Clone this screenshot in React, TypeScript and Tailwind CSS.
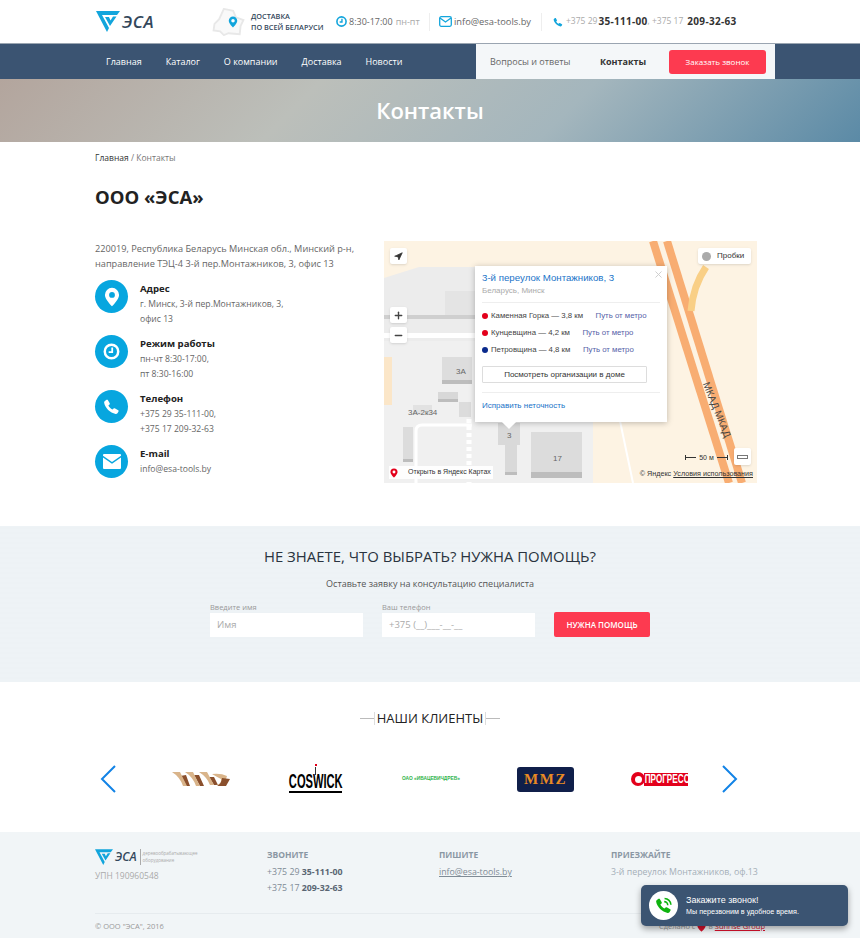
import { Navigation, Plus, Minus, X } from 'lucide-react';

const font = { fontFamily: '"Open Sans", "Noto Sans", sans-serif' };
const mapFont = { fontFamily: '"Liberation Sans", sans-serif' };

const Logo = ({ small }: { small?: boolean }) => (
  <div className="flex items-center">
    <svg width={small ? 18 : 24} height={small ? 16 : 21} viewBox="0 0 24 21">
      <path d="M0 0H24L21 4H6L13 17L11 21Z" fill="#12a5dc" />
      <path d="M9 6H13L14.500 9.500L17 5.500H20.500L14 15Z" fill="#12a5dc" />
    </svg>
    <span className={small ? 'ml-[2px] text-[12px] font-semibold italic text-[#33475b]' : 'ml-[2px] text-[17px] font-semibold italic text-[#33475b] tracking-[0.5px]'}>ЭСА</span>
  </div>
);

const PinIcon = ({ size, color, hole }: { size: number; color: string; hole: string }) => (
  <svg width={size} height={size} viewBox="0 0 24 24">
    <path d="M12 1a8.500 8.500 0 0 0-8.500 8.500C3.500 15 12 23 12 23s8.500-8 8.500-13.500A8.500 8.500 0 0 0 12 1z" fill={color} />
    <circle cx="12" cy="9.500" r="3.500" fill={hole} />
  </svg>
);

const HandsetIcon = ({ size, color }: { size: number; color: string }) => (
  <svg width={size} height={size} viewBox="0 0 24 24">
    <path d="M6.600 2.500 9.500 7.500c.3.500.2 1.100-.2 1.500L7.600 10.700c1.200 2.500 3.200 4.500 5.700 5.700l1.700-1.700c.4-.4 1-.5 1.500-.2l5 2.900c.6.300.8 1.100.4 1.700l-1.500 2.300c-.6.900-1.600 1.300-2.600 1.100C10 21 3 14 1.600 6.700c-.2-1 .2-2 1.100-2.600l2.200-1.500c.6-.4 1.400-.2 1.700-.1z" fill={color} />
  </svg>
);

const ClockIcon = () => (
  <svg width="17" height="17" viewBox="0 0 24 24" fill="none">
    <circle cx="12" cy="12" r="9.500" stroke="white" strokeWidth="3.500" />
    <path d="M13 6.500V13H8" stroke="white" strokeWidth="2.500" />
  </svg>
);

const EnvelopeIcon = () => (
  <svg width="18" height="15" viewBox="0 0 18 15">
    <path d="M1 0h16a1 1 0 0 1 1 1v.8L9 8 0 1.800V1a1 1 0 0 1 1-1z" fill="white" />
    <path d="M0 3.600 9 9.800l9-6.200V14a1 1 0 0 1-1 1H1a1 1 0 0 1-1-1z" fill="white" />
  </svg>
);

const navItems = ['Главная', 'Каталог', 'О компании', 'Доставка', 'Новости'];

const contacts = [
  { icon: <PinIcon size={20} color="white" hole="#07a6df" />, title: 'Адрес', lines: ['г. Минск, 3-й пер.Монтажников, 3,', 'офис 13'] },
  { icon: <ClockIcon />, title: 'Режим работы', lines: ['пн-чт 8:30-17:00,', 'пт 8:30-16:00'] },
  { icon: <HandsetIcon size={17} color="white" />, title: 'Телефон', lines: ['+375 29 35-111-00,', '+375 17 209-32-63'] },
  { icon: <EnvelopeIcon />, title: 'E-mail', lines: ['info@esa-tools.by'] },
];

const metro = [
  { color: 'bg-[#e3001b]', name: 'Каменная Горка — 3,8 км' },
  { color: 'bg-[#e3001b]', name: 'Кунцевщина — 4,2 км' },
  { color: 'bg-[#0a2a8c]', name: 'Петровщина — 4,8 км' },
];

const MapView = () => (
  <div className="relative w-[373px] h-[242px] overflow-hidden bg-[#fdf3e3]" style={mapFont}>
    <svg className="absolute inset-0" width="373" height="242" viewBox="0 0 373 242">
      <path d="M0 37 L35 26 L91 26 L91 100 L0 100z" fill="#ececec" />
      <path d="M61 50h60v26H61z" fill="#e4e4e4" />
      <path d="M0 74h130v4H0z" fill="#cfcfcf" />
      <path d="M0 100h209v142H0z" fill="#f0f0f0" />
      <path d="M0 92h130v5H0z" fill="#ffffff" />
      <path d="M0 116h8v48H0z" fill="#fbe6c8" />
      <path d="M58 116h30v26H58z" fill="#dddddd" />
      <path d="M58 139h30v4H58z" fill="#bdbdbd" />
      <path d="M54 151h20v10H54z" fill="#d8d8d8" />
      <path d="M54 158h20v3H54z" fill="#bdbdbd" />
      <path d="M75 161h12v15H75z" fill="#dcdcdc" />
      <path d="M29 164h19v10H29z" fill="#e2e2e2" />
      <path d="M19 186h10v35H19z" fill="#dcdcdc" />
      <path d="M19 218h10v3H19z" fill="#bdbdbd" />
      <path d="M114 182h22v22h-3v30h-12v-30h-7z" fill="#d9d9d9" />
      <path d="M121 231h12v3h-12z" fill="#bdbdbd" />
      <path d="M147 191h51v46h-51z" fill="#dcdcdc" />
      <path d="M147 231h51v6h-51z" fill="#bdbdbd" />
      <path d="M32 242V190q0-6 6-6h50" fill="none" stroke="#ffffff" strokeWidth="3" />
      <path d="M85 178v64" fill="none" stroke="#ffffff" strokeWidth="5" strokeDasharray="4 3" />
      <path d="M236 180 L249 242" fill="none" stroke="#ffffff" strokeWidth="2" />
      <path d="M269 0 L345 242" fill="none" stroke="#f8ad72" strokeWidth="8" />
      <path d="M283 0 L358 242" fill="none" stroke="#f8ad72" strokeWidth="8" />
      <path d="M322 26 Q309 45 307 70" fill="none" stroke="#f9cf86" strokeWidth="7" />
    </svg>

    <span className="absolute left-[72px] top-[125px] text-[8px] text-[#666]">3А</span>
    <span className="absolute left-[24px] top-[166px] text-[8px] text-[#666]">3А-2к34</span>
    <span className="absolute left-[123px] top-[189px] text-[8px] text-[#666]">3</span>
    <span className="absolute left-[169px] top-[212px] text-[8px] text-[#666]">17</span>
    <span className="absolute left-[322px] top-[134px] rotate-[68deg] origin-left whitespace-nowrap text-[10px] text-[#444]">МКАД МКАД</span>

    <div className="absolute left-[6px] top-[7px] w-[17px] h-[16px] bg-white shadow-sm flex items-center justify-center rounded-[2px]">
      <Navigation size={9} fill="#333" stroke="#333" />
    </div>
    <div className="absolute left-[6px] top-[66px] w-[17px] h-[16px] bg-white shadow-sm flex items-center justify-center rounded-[2px]">
      <Plus size={11} strokeWidth={3} color="#444" />
    </div>
    <div className="absolute left-[6px] top-[86px] w-[17px] h-[16px] bg-white shadow-sm flex items-center justify-center rounded-[2px]">
      <Minus size={11} strokeWidth={3} color="#444" />
    </div>
    <div className="absolute left-[314px] top-[7px] w-[53px] h-[16px] bg-white shadow-sm rounded-[2px] flex items-center pl-[4px] gap-[6px]">
      <span className="w-[9px] h-[9px] rounded-full bg-[#aaa]" />
      <span className="text-[8px] text-[#333]">Пробки</span>
    </div>

    {/* balloon */}
    <div className="absolute left-[91px] top-[25px] w-[192px] h-[156px] bg-white shadow-[0_1px_6px_rgba(0,0,0,0.25)] px-[7px] pt-[5px]">
      <X size={11} color="#ccc" className="absolute right-[3px] top-[3px]" />
      <div className="text-[9.700px] leading-[14px] text-[#1a73c8]">3-й переулок Монтажников, 3</div>
      <div className="text-[8px] leading-[11px] text-[#aaa]">Беларусь, Минск</div>
      <div className="h-px bg-[#eee] mt-[6px] mb-[7px]" />
      <div className="flex flex-col gap-[6px]">
        {metro.map((m) => (
          <div key={m.name} className="flex items-center h-[11px] text-[7.800px] text-[#444]">
            <span className={`w-[6px] h-[6px] rounded-full ${m.color} mr-[3px]`} />
            {m.name}
            <span className="ml-[12.500px] text-[#5561a8]">Путь от метро</span>
          </div>
        ))}
      </div>
      <div className="mt-[11px] h-[17px] w-[165px] border border-[#ddd] rounded-[1px] flex items-center justify-center text-[8px] text-[#333]">Посмотреть организации в доме</div>
      <div className="h-px bg-[#eee] mt-[9px] mb-[7px]" />
      <div className="text-[8px] text-[#1a73c8]">Исправить неточность</div>
      <span className="absolute left-[29px] -bottom-[5px] w-[10px] h-[10px] rotate-45 bg-white" />
    </div>

    <div className="absolute left-[5px] bottom-[4px] h-[13px] w-[104px] bg-white/90 flex items-center">
      <PinIcon size={10} color="#e3001b" hole="white" />
      <span className="ml-[9px] text-[7px] text-[#333]">Открыть в Яндекс Картах</span>
    </div>
    <div className="absolute right-[4px] bottom-[5px] text-[7.200px] text-[#333] leading-[9px]">
      © Яндекс <span className="underline">Условия использования</span>
    </div>
    <div className="absolute left-[301px] top-[212px] w-[43px] flex items-center justify-between text-[7px] leading-[9px] text-[#333]">
      <span className="h-[5px] w-[11px] border-l border-[#333] relative"><span className="absolute top-[2px] left-0 w-full h-px bg-[#333]" /></span>
      <span>50 м</span>
      <span className="h-[5px] w-[11px] border-r border-[#333] relative"><span className="absolute top-[2px] left-0 w-full h-px bg-[#333]" /></span>
    </div>
    <div className="absolute left-[350px] top-[207px] w-[17px] h-[17px] bg-white shadow-sm rounded-[2px] flex items-center justify-center">
      <span className="w-[11px] h-[4px] border border-[#777]" />
    </div>
  </div>
);

const ClientLogos = () => (
  <div className="flex items-center gap-[58px] w-[516px] h-[30px] ml-[55px] mr-[33px]" style={mapFont}>
    <svg className="shrink-0" width="58" height="16" viewBox="0 0 58 16">
      <path d="M8 5l6 10h4l-4-11zM22 4l6 11h4l-5-11zM37 6l5 8h4l-4-8z" fill="#8a4f2c" />
      <path d="M0 1h8l7 14h-4q-3-9-11-14zM13 1h8l7 14h-4q-3-9-11-14zM27 1h8l7 13h-4q-3-8-11-13z" fill="#d9b48a" />
      <path d="M40 3q9-1 15 2l-3 9h-8q6-1 5-6-4-2-9-5z" fill="#d9b48a" />
      <path d="M50 7l8 1-4 7h-9q5-3 5-8z" fill="#8a4f2c" />
    </svg>
    <div className="relative ml-[1px] w-[53px] h-[30px] shrink-0 flex flex-col items-center justify-end">
      <span className="absolute top-0 left-[26px] w-[2px] h-[2px] bg-[#e3001b]" />
      <span className="absolute top-[3px] left-[26px] w-px h-[8px] bg-[#333]" />
      <span className="text-[21px] leading-[20px] font-bold text-black scale-x-[0.53] whitespace-nowrap">COSWICK</span>
      <span className="w-full h-[2px] bg-black mb-[1px]" />
    </div>
    <span className="ml-[2px] w-[57px] shrink-0 text-[4.800px] font-bold text-[#2eb34a] whitespace-nowrap">ОАО «ИВАЦЕВИЧДРЕВ»</span>
    <div className="w-[57px] h-[25px] shrink-0 rounded-[3px] bg-[#101f4a] flex items-center justify-center text-[15px] font-bold text-[#e88a24] tracking-[1.500px]" style={{ fontFamily: '"Liberation Serif", serif' }}>MMZ</div>
    <div className="-ml-[1px] w-[57px] h-[16px] shrink-0 overflow-hidden flex items-center">
      <span className="w-[14px] h-[14px] rounded-full bg-[#e3001b] shrink-0 flex items-center justify-center">
        <span className="w-[7px] h-[7px] rounded-full bg-white" />
      </span>
      <span className="-ml-[1px] pl-[1px] pr-[20px] bg-[#e3001b] text-[12px] leading-[13px] font-bold text-white whitespace-nowrap scale-x-[0.68] origin-left">ПРОГРЕСС</span>
    </div>
  </div>
);

const Chevron = ({ right }: { right?: boolean }) => (
  <svg className="shrink-0" width="17" height="28" viewBox="0 0 17 28" fill="none">
    <path d={right ? 'M2 1l13 13L2 27' : 'M15 1L2 14l13 13'} stroke="#1283e6" strokeWidth="2" />
  </svg>
);

const App = () => {
  return (
    <div className="relative w-[860px] h-[938px] overflow-hidden bg-white text-[#555]" style={font}>
      {/* top bar */}
      <header className="h-[43px] flex items-center pl-[96px]">
        <div className="w-[116px]"><Logo /></div>
        <div className="w-[124px] flex items-center">
          <div className="relative w-[33px] h-[28px]">
            <svg width="33" height="28" viewBox="0 0 34 30" className="absolute inset-0">
              <path d="M12 1l10 2 3 7 8 3-3 6-1 9-12-1-5 2-4-4-7-1 1-7 5-5z" fill="#f9f9f9" stroke="#e8e8e8" strokeWidth="2" />
            </svg>
            <span className="absolute left-[15px] top-[8px]"><PinIcon size={12} color="#12a5dc" hole="white" /></span>
          </div>
          <div className="ml-[6px] text-[7.300px] leading-[11px] font-semibold text-[#33475b] whitespace-nowrap">
            ДОСТАВКА<br />ПО ВСЕЙ БЕЛАРУСИ
          </div>
        </div>
        <div className="w-[93px] flex items-center text-[9px] text-[#666] whitespace-nowrap">
          <svg width="11" height="11" viewBox="0 0 24 24" fill="none">
            <circle cx="12" cy="12" r="10" stroke="#12a5dc" strokeWidth="3.500" />
            <path d="M13 6v7H8" stroke="#12a5dc" strokeWidth="3" />
          </svg>
          <span className="ml-[2px]">8:30-17:00</span>
          <span className="ml-[3px] text-[9px] text-[#aaa]">пн-пт</span>
        </div>
        <div className="w-px h-[18px] bg-[#eee]" />
        <div className="ml-[9px] w-[102px] flex items-center text-[9.300px] text-[#666]">
          <svg width="13" height="11" viewBox="0 0 13 11" fill="none">
            <rect x="0.700" y="0.700" width="11.600" height="9.600" rx="1.500" stroke="#12a5dc" strokeWidth="1.300" />
            <path d="M1 2l5.500 4L12 2" stroke="#12a5dc" strokeWidth="1.300" />
          </svg>
          <span className="ml-[2px]">info@esa-tools.by</span>
        </div>
        <div className="w-px h-[18px] bg-[#eee]" />
        <div className="ml-[11px] flex items-center text-[8.500px] text-[#aaa] whitespace-nowrap">
          <HandsetIcon size={10} color="#12a5dc" />
          <span className="ml-[3px]">+375 29</span>
          <b className="ml-[1px] text-[10px] font-bold text-[#333] tracking-[0.3px]">35-111-00</b>
          <span>, +375 17</span>
          <b className="ml-[4px] text-[10px] font-bold text-[#333] tracking-[0.3px]">209-32-63</b>
        </div>
      </header>

      {/* nav */}
      <nav className="h-[36px] bg-[#3b5472] border-t border-[#9aa5b1] flex items-center pl-[106px]">
        <div className="flex gap-[24px] text-[9px] text-white w-[370px]">
          {navItems.map((n) => (
            <span key={n}>{n}</span>
          ))}
        </div>
        <div className="h-full w-[299px] bg-[#f4f7f9] flex items-center pl-[14px] text-[9px] whitespace-nowrap">
          <span className="w-[110px] text-[#666]">Вопросы и ответы</span>
          <b className="w-[69px] font-bold text-[#333]">Контакты</b>
          <span className="w-[97px] h-[24px] rounded-[3px] bg-[#fd3a50] flex items-center justify-center text-[8px] text-white">Заказать звонок</span>
        </div>
      </nav>

      {/* hero */}
      <section className="h-[63px] flex items-center justify-center bg-[linear-gradient(135deg,#b3a59d_0%,#bcbfba_35%,#a4b6bd_65%,#5b8aa6_100%)]">
        <h2 className="text-[22px] font-semibold text-white">Контакты</h2>
      </section>

      {/* contacts */}
      <main className="px-[95px] h-[384px]">
        <div className="pt-[10px] text-[8.500px] leading-[12px] text-[#777]"><span className="text-[#333]">Главная</span> / Контакты</div>
        <h1 className="mt-[21px] text-[18.500px] leading-[24px] font-bold text-[#222]">ООО «ЭСА»</h1>
        <div className="mt-[32px] flex">
          <div className="w-[289px]">
            <p className="text-[9.200px] leading-[15px] text-[#666]">220019, Республика Беларусь Минская обл., Минский р-н,<br />направление ТЭЦ-4 3-й пер.Монтажников, 3, офис 13</p>
            <div className="mt-[9px] flex flex-col gap-[22px]">
              {contacts.map((c) => (
                <div key={c.title} className="flex h-[33px]">
                  <div className="w-[33px] h-[33px] rounded-full bg-[#07a6df] flex items-center justify-center shrink-0">{c.icon}</div>
                  <div className="ml-[12px] pt-[1px]">
                    <div className="text-[9.600px] leading-[15px] mb-[1px] font-bold text-[#222]">{c.title}</div>
                    {c.lines.map((l) => (
                      <div key={l} className="text-[8.600px] leading-[15px] text-[#666]">{l}</div>
                    ))}
                  </div>
                </div>
              ))}
            </div>
          </div>
          <MapView />
        </div>
      </main>

      {/* help form */}
      <section className="h-[156px] bg-[repeating-linear-gradient(0deg,#eef3f6_0px,#eef3f6_3px,#edf2f5_3px,#edf2f5_5px)] flex flex-col items-center pt-[20px]">
        <h2 className="text-[14.900px] leading-[21px] font-medium text-[#2a3440]">НЕ ЗНАЕТЕ, ЧТО ВЫБРАТЬ? НУЖНА ПОМОЩЬ?</h2>
        <p className="mt-[10px] text-[9px] leading-[14px] text-[#555]">Оставьте заявку на консультацию специалиста</p>
        <div className="mt-[11px] flex items-end">
          <label className="w-[153px] block">
            <span className="block text-[7.500px] leading-[10px] text-[#999] mb-[1px]">Введите имя</span>
            <span className="flex items-center h-[24px] bg-white pl-[7px] text-[9.500px] text-[#aaa]">Имя</span>
          </label>
          <label className="ml-[19px] w-[153px] block">
            <span className="block text-[7.500px] leading-[10px] text-[#999] mb-[1px]">Ваш телефон</span>
            <span className="flex items-center h-[24px] bg-white pl-[7px] text-[9.500px] text-[#aaa]">+375 (__)___-__-__</span>
          </label>
          <span className="ml-[19px] w-[96px] h-[25px] rounded-[2px] bg-[#fd3a50] flex items-center justify-center text-[8px] font-semibold text-white">НУЖНА ПОМОЩЬ</span>
        </div>
      </section>

      {/* clients */}
      <section className="h-[150px] pt-[27px]">
        <div className="flex items-center justify-center">
          <span className="w-[14px] h-px bg-[#bbb]" />
          <span className="w-px h-[13px] bg-[#ddd]" />
          <h2 className="mx-[2px] text-[13px] leading-[18px] text-[#222]">НАШИ КЛИЕНТЫ</h2>
          <span className="w-px h-[13px] bg-[#ddd]" />
          <span className="w-[14px] h-px bg-[#bbb]" />
        </div>
        <div className="mt-[37px] pl-[100px] flex items-center">
          <Chevron />
          <ClientLogos />
          <Chevron right />
        </div>
      </section>

      {/* footer */}
      <footer className="h-[106px] bg-[#f1f5f7] px-[95px] pt-[17px]">
        <div className="flex h-[65px] border-b border-[#e6ebee]">
          <div className="w-[172px]">
            <div className="flex items-center h-[16px]">
              <Logo small />
              <span className="ml-[3px] w-px h-[16px] bg-[#aaa]" />
              <span className="ml-[2px] text-[4.500px] leading-[7px] text-[#aaa]">деревообрабатывающее<br />оборудование</span>
            </div>
            <div className="mt-[5px] text-[8.500px] text-[#aaa]">УПН 190960548</div>
          </div>
          <div className="w-[172px]">
            <div className="text-[8.500px] leading-[12px] font-bold text-[#8a97a3]">ЗВОНИТЕ</div>
            <div className="mt-[3px] text-[8.800px] leading-[16px] text-[#7f8b96]">+375 29 <b className="font-bold text-[#5a6673]">35-111-00</b></div>
            <div className="text-[8.800px] leading-[16px] text-[#7f8b96]">+375 17 <b className="font-bold text-[#5a6673]">209-32-63</b></div>
          </div>
          <div className="w-[172px]">
            <div className="text-[8.500px] leading-[12px] font-bold text-[#8a97a3]">ПИШИТЕ</div>
            <div className="mt-[3px] text-[8.800px] leading-[16px] text-[#7f8b96] underline">info@esa-tools.by</div>
          </div>
          <div>
            <div className="text-[8.500px] leading-[12px] font-bold text-[#8a97a3]">ПРИЕЗЖАЙТЕ</div>
            <div className="mt-[3px] text-[8.800px] leading-[16px] text-[#a5afb8]">3-й переулок Монтажников, оф.13</div>
          </div>
        </div>
        <div className="flex justify-between pt-[7px] text-[7.500px] leading-[11px] text-[#999]">
          <span>© ООО "ЭСА", 2016</span>
          <span className="flex items-center">
            Сделано с
            <svg className="mx-[2px] mt-[1px]" width="9" height="9" viewBox="0 0 24 24"><path d="M12 23S1 15 1 7.500A5.800 5.800 0 0 1 12 4.800 5.800 5.800 0 0 1 23 7.500C23 15 12 23 12 23z" fill="#d8112c" /></svg>
            в
            <span className="ml-[2px] text-[#d8112c] underline">Sunrise Group</span>
          </span>
        </div>
      </footer>

      {/* callback popup */}
      <div className="absolute left-[641px] top-[885px] w-[207px] h-[41px] rounded-[5px] bg-[#3b5472] shadow-[0_3px_6px_rgba(0,0,0,0.35)] flex items-center pl-[8px]" style={mapFont}>
        <div className="w-[29px] h-[29px] rounded-full bg-white flex items-center justify-center shrink-0">
          <svg width="17" height="17" viewBox="0 0 24 24" fill="none">
            <path d="M6.600 2.500 9.500 7.500c.3.500.2 1.100-.2 1.500L7.600 10.700c1.200 2.500 3.200 4.500 5.700 5.700l1.700-1.700c.4-.4 1-.5 1.500-.2l5 2.900c.6.300.8 1.100.4 1.700l-1.500 2.300c-.6.900-1.600 1.300-2.600 1.100C10 21 3 14 1.600 6.700c-.2-1 .2-2 1.100-2.600l2.200-1.500c.6-.4 1.400-.2 1.700-.1z" fill="#0fb30f" />
            <path d="M13 6.500a5 5 0 0 1 5 5M13.500 2a9.500 9.500 0 0 1 9 9" stroke="#0fb30f" strokeWidth="2.200" />
          </svg>
        </div>
        <div className="ml-[8px] text-white">
          <div className="text-[9px] leading-[12px]">Закажите звонок!</div>
          <div className="text-[7.200px] leading-[11px]">Мы перезвоним в удобное время.</div>
        </div>
      </div>
    </div>
  );
};

export default App;
